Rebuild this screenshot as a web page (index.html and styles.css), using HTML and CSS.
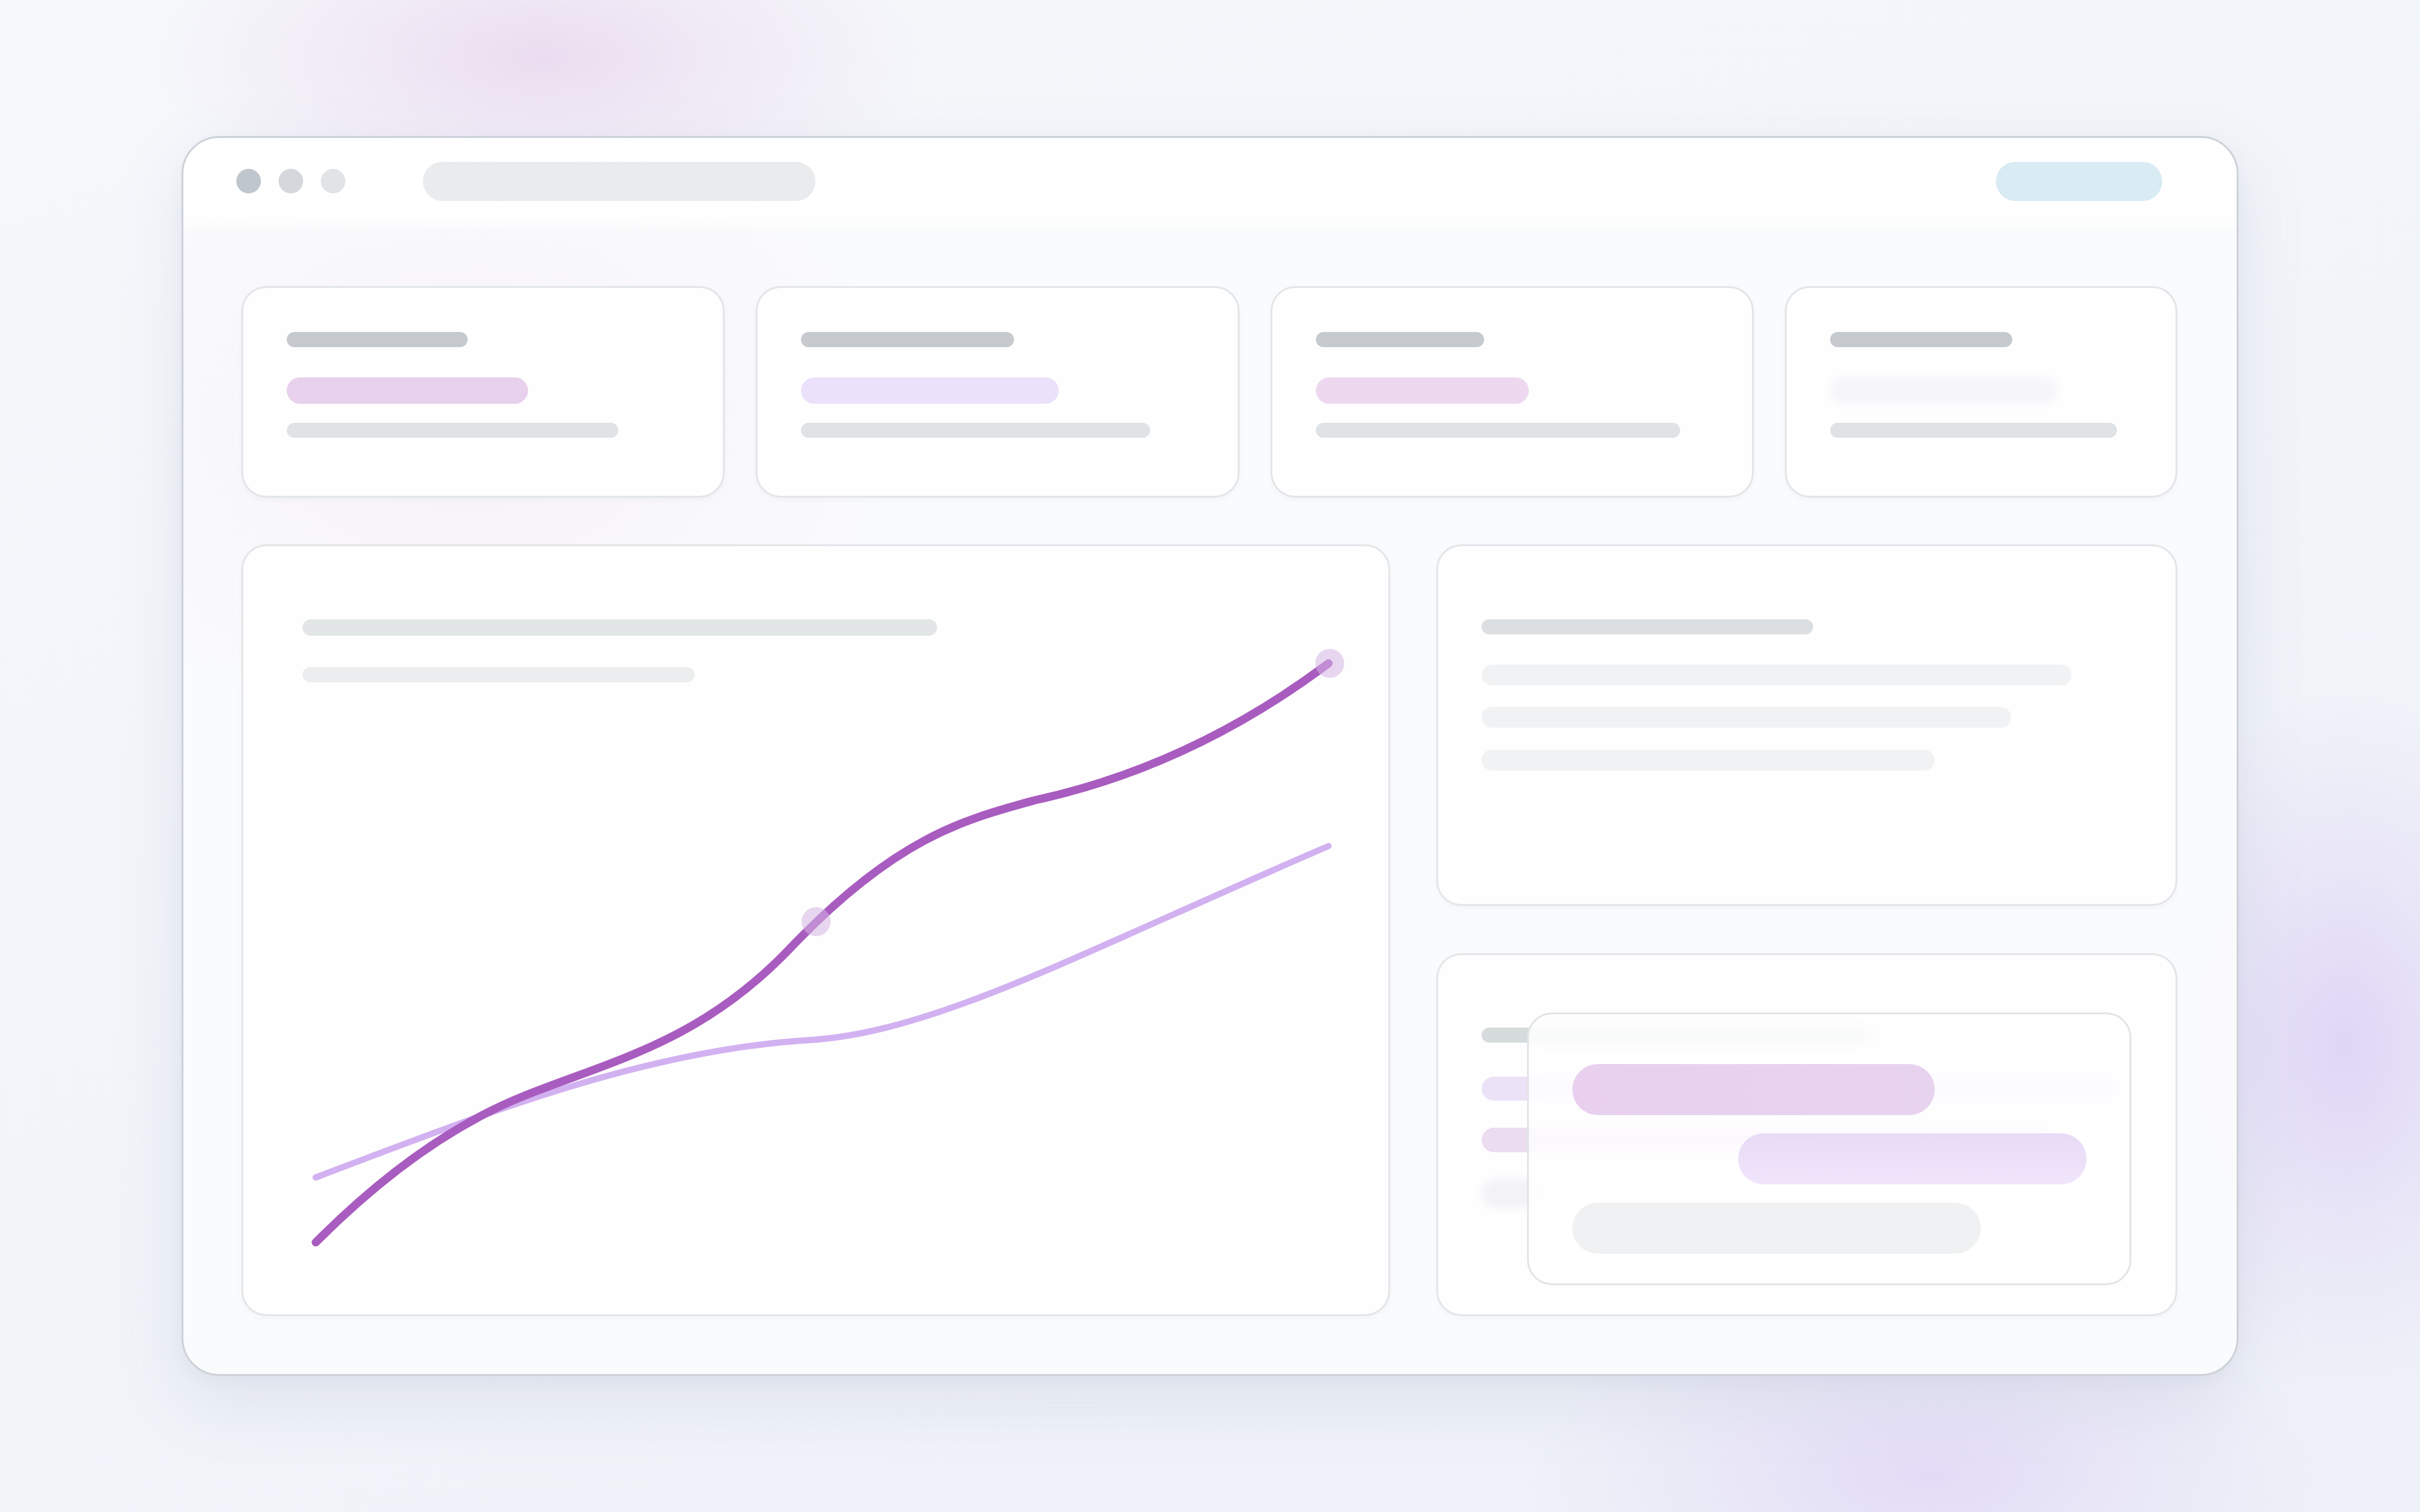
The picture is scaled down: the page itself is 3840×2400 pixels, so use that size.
FILE: index.html
```html
<!DOCTYPE html>
<html lang="en">
<head>
<meta charset="utf-8">
<title>Dashboard</title>
<link rel="stylesheet" href="styles.css">
</head>
<body>
<div class="window">
  <div class="topbar">
    <div class="dots">
      <span class="dot d1"></span>
      <span class="dot d2"></span>
      <span class="dot d3"></span>
    </div>
    <div class="url"></div>
    <div class="spacer"></div>
    <div class="action"></div>
  </div>
  <div class="content">
    <div class="stats">
      <div class="card stat s1">
        <div class="bar t"></div>
        <div class="bar v"></div>
        <div class="bar f"></div>
      </div>
      <div class="card stat s2">
        <div class="bar t"></div>
        <div class="bar v"></div>
        <div class="bar f"></div>
      </div>
      <div class="card stat s3">
        <div class="bar t"></div>
        <div class="bar v"></div>
        <div class="bar f"></div>
      </div>
      <div class="card stat s4">
        <div class="bar t"></div>
        <div class="bar v"></div>
        <div class="bar f"></div>
      </div>
    </div>
    <div class="main">
      <div class="card chart">
        <div class="chart-head">
          <div class="bar ct"></div>
          <div class="bar cs"></div>
        </div>
        <svg class="plot" viewBox="0 0 1823 1222" preserveAspectRatio="none">
          <path class="line-light" d="M118,1005 C378.7,906 639.3,802.6 900,787 C1100,775 1325,651 1725,479"/>
          <path class="line-dark" d="M118,1108 C228.7,997 339.3,919 450,875 C590,819 730,789 870,642 C1040,463.5 1150,436 1260,406 C1415,372 1570,305 1725,189"/>
          <circle class="pt" cx="912" cy="599" r="23"/>
          <circle class="pt" cx="1727" cy="189" r="23"/>
        </svg>
      </div>
      <div class="side">
        <div class="card list">
          <div class="bar lt"></div>
          <div class="bar l1"></div>
          <div class="bar l2"></div>
          <div class="bar l3"></div>
        </div>
        <div class="card stack">
          <div class="bar k0"></div>
          <div class="bar k1"></div>
          <div class="bar k2"></div>
          <div class="bar k3"></div>
          <div class="overlay">
            <div class="pill p1"></div>
            <div class="pill p2"></div>
            <div class="pill p3"></div>
          </div>
        </div>
      </div>
    </div>
  </div>
</div>
</body>
</html>
```

FILE: styles.css
```css
html, body {
  margin: 0;
  padding: 0;
}
body {
  width: 3840px;
  height: 2400px;
  overflow: hidden;
  display: flex;
  align-items: center;
  justify-content: center;
  font-family: "Inter", "Liberation Sans", sans-serif;
  background:
    radial-gradient(ellipse 620px 280px at 860px 90px, rgba(232, 212, 236, 0.75) 0%, rgba(234, 218, 240, 0.45) 45%, rgba(240, 232, 246, 0) 100%),
    radial-gradient(ellipse 380px 560px at 3720px 1660px, rgba(222, 212, 246, 0.95) 0%, rgba(226, 218, 246, 0.5) 50%, rgba(236, 234, 248, 0) 100%),
    radial-gradient(ellipse 640px 290px at 3060px 2340px, rgba(226, 218, 246, 0.95) 0%, rgba(228, 222, 246, 0.5) 50%, rgba(236, 234, 248, 0) 100%),
    linear-gradient(160deg, #f6f8fb 0%, #f1f4f9 50%, #eef1f8 100%);
}

.window {
  box-sizing: border-box;
  width: 3264px;
  height: 1968px;
  border: 3px solid #cdd2d9;
  border-radius: 60px;
  background:
    radial-gradient(ellipse 700px 500px at 450px 450px, rgba(244, 236, 246, 0.6) 0%, rgba(248, 244, 249, 0) 100%),
    rgba(250, 251, 252, 0.96);
  box-shadow: 0 40px 110px rgba(110, 120, 160, 0.13), 0 8px 24px rgba(110, 120, 160, 0.05);
  display: flex;
  flex-direction: column;
  overflow: hidden;
}

.topbar {
  height: 146px;
  box-sizing: border-box;
  display: flex;
  align-items: center;
  padding: 0 118px 6px 84px;
  background: linear-gradient(180deg, rgba(255,255,255,0.98) 0%, rgba(255,255,255,0.95) 85%, rgba(255,255,255,0.4) 100%);
}
.dots {
  display: flex;
  gap: 28px;
}
.dot {
  width: 39px;
  height: 39px;
  border-radius: 50%;
}
.d1 { background: #bfc6cd; }
.d2 { background: #d4d8dc; }
.d3 { background: #e1e4e7; }
.url {
  margin-left: 123px;
  width: 623px;
  height: 62px;
  border-radius: 31px;
  background: #e9ebec;
}
.spacer { flex: 1; }
.action {
  width: 264px;
  height: 62px;
  border-radius: 31px;
  background: #d9ebf3;
}

.content {
  flex: 1;
  padding: 92px 94px 92px 92px;
  display: flex;
  flex-direction: column;
  gap: 74px;
}

.card {
  box-sizing: border-box;
  border: 3px solid #e3e6e9;
  border-radius: 40px;
  background: rgba(254, 254, 255, 0.96);
  box-shadow: 0 4px 10px rgba(30, 40, 70, 0.03);
}

.bar {
  border-radius: 999px;
}

.stats {
  height: 336px;
  display: grid;
  grid-template-columns: 1fr 1fr 1fr 0.812fr;
  gap: 49px;
}
.stat {
  padding: 70px 0 0 69px;
  display: flex;
  flex-direction: column;
  align-items: flex-start;
}
.stat .t { height: 24px; background: #c6cacf; }
.stat .v { height: 42px; margin-top: 48px; }
.stat .f { height: 24px; margin-top: 30px; background: #e0e3e5; }
.s1 .t { width: 287px; }
.s1 .v { width: 383px; background: #e8d1ec; }
.s1 .f { width: 526px; }
.s2 .t { width: 338px; }
.s2 .v { width: 409px; background: #ebe1fa; }
.s2 .f { width: 554px; }
.s3 .t { width: 267px; }
.s3 .v { width: 338px; background: #eed8f0; }
.s3 .f { width: 578px; }
.s4 .t { width: 289px; }
.s4 .v { width: 360px; background: #f6f6f9; filter: blur(6px); }
.s4 .f { width: 455px; }

.main {
  flex: 1;
  display: grid;
  grid-template-columns: 1.55fr 1fr;
  gap: 73px;
}

.chart {
  display: grid;
  overflow: hidden;
  background: rgba(254, 254, 254, 0.98);
}
.chart-head,
.plot {
  grid-area: 1 / 1;
}
.chart-head {
  padding: 116px 0 0 94px;
  display: flex;
  flex-direction: column;
  align-items: flex-start;
}
.ct { width: 1007px; height: 26px; background: #e3e6e7; }
.cs { width: 622px; height: 24px; margin-top: 50px; background: #ebedee; }
.plot {
  width: 1823px;
  height: 1222px;
  margin: -3px 0 0 -3px;
}
.line-dark {
  fill: none;
  stroke: #a95cbf;
  stroke-width: 13;
  stroke-linecap: round;
}
.line-light {
  fill: none;
  stroke: #d2b1f1;
  stroke-width: 10;
  stroke-linecap: round;
}
.pt {
  fill: rgba(214, 180, 228, 0.55);
}

.side {
  display: grid;
  grid-template-rows: 573fr 574fr;
  gap: 75px;
}
.list {
  padding: 116px 0 0 69px;
  display: flex;
  flex-direction: column;
  align-items: flex-start;
}
.lt { width: 526px; height: 24px; background: #dcdfe1; }
.l1 { width: 936px; height: 33px; margin-top: 48px; background: #f1f2f3; }
.l2 { width: 840px; height: 33px; margin-top: 34px; background: #f1f2f3; }
.l3 { width: 719px; height: 33px; margin-top: 35px; background: #f1f2f3; }

.stack {
  position: relative;
  padding: 115px 0 0 69px;
  display: flex;
  flex-direction: column;
  align-items: flex-start;
}
.k0 { width: 623px; height: 24px; background: #d6dbdc; }
.k1 { width: 1010px; height: 38px; margin-top: 54px; background: #ece2f8; }
.k2 { width: 900px; height: 39px; margin-top: 43px; background: #ecdcf0; }
.k3 { width: 110px; height: 45px; margin-top: 43px; background: #f3f3f6; filter: blur(6px); }

.overlay {
  position: absolute;
  left: 141px;
  top: 91px;
  width: 959px;
  height: 433px;
  box-sizing: border-box;
  border: 3px solid #e2e5e8;
  border-radius: 40px;
  background: rgba(255, 255, 255, 0.8);
  backdrop-filter: blur(14px);
  padding: 79px 0 0 69px;
  display: flex;
  flex-direction: column;
  align-items: flex-start;
  gap: 29px;
}
.pill {
  height: 81px;
  border-radius: 41px;
}
.p1 { width: 575px; background: linear-gradient(90deg, #e8d0ee, #e8d3ef); }
.p2 { width: 553px; margin-left: 263px; background: linear-gradient(180deg, #e8dbf6, #f0e5fb); }
.p3 { width: 648px; background: #f0f1f2; }
```
